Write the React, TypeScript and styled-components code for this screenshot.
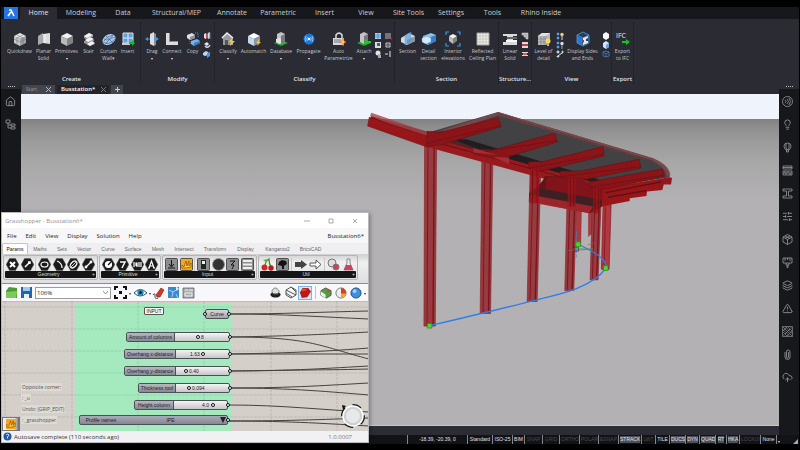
import React from "react";
import styled, { createGlobalStyle } from "styled-components";
import { CloudUpload, House, Layers, Lightbulb, Paperclip, SlidersHorizontal, TriangleAlert } from "lucide-react";

const Global = createGlobalStyle`
  *, *::before, *::after { box-sizing: border-box; }
  body { margin: 0; background: #000; font-family: "Open Sans", "Noto Sans", sans-serif; }
  button, select, input { font: inherit; color: inherit; margin: 0; padding: 0; border: 0; background: none; border-radius: 0; }
  svg { display: block; flex: none; }
  a { color: inherit; text-decoration: none; }
`;

/* ---------- shell ---------- */
const Page = styled.div`
  position: relative;
  display: flex;
  flex-direction: column;
  height: 100vh;
  padding: 7px 1px 6px;
  overflow: hidden;
  background: #000;
  color: #c9cacc;
`;
const MenuBar = styled.nav`
  display: flex;
  height: 12px;
  background: #16181c;
  font-size: 7px;
  line-height: 12px;
`;
const Logo = styled.button`
  width: 19px;
  padding-left: 3px;
`;
const MenuItem = styled.a<{ $w: number; $on?: boolean }>`
  width: ${(p) => p.$w}px;
  text-align: center;
  white-space: nowrap;
  color: ${(p) => (p.$on ? "#e2e2e4" : "#cdced0")};
  background: ${(p) => (p.$on ? "#2a2b33" : "transparent")};
`;
const Ribbon = styled.div`
  display: flex;
  height: 66px;
  padding: 3px 0 1px 2px;
  background: #2a2b33;
`;
const Group = styled.section<{ $w: number }>`
  display: flex;
  flex-direction: column;
  justify-content: space-between;
  width: ${(p) => p.$w}px;
  padding-top: 10px;
  border-right: 1px dotted #191a20;
`;
const Tools = styled.div`
  display: flex;
  justify-content: center;
`;
const GroupName = styled.h2`
  margin: 0 -1px 1px;
  text-align: center;
  white-space: nowrap;
  font-size: 6px;
  font-weight: 600;
  line-height: 8px;
  color: #e4e4e6;
`;
const Tool = styled.button<{ $w: number }>`
  display: flex;
  flex-direction: column;
  align-items: center;
  width: ${(p) => p.$w}px;
  font-size: 5px;
  line-height: 7px;
  color: #c6c7ca;
  white-space: pre;
  text-align: center;
`;
const ToolText = styled.span`
  margin-top: 2px;
`;
const Caret = styled.i<{ $dark?: boolean }>`
  width: 0;
  height: 0;
  margin-top: 3px;
  border: 1px solid transparent;
  border-top: 2px solid ${(p) => (p.$dark ? "#333" : "#e8e8e8")};
`;
const MiniStack = styled.div`
  display: flex;
  flex-direction: column;
  gap: 1px;
  align-items: center;
  width: 10px;
`;
const MiniButton = styled.button`
  height: 8px;
`;

/* ---------- body ---------- */
const Body = styled.div`
  display: flex;
  flex: 1;
  min-height: 0;
`;
const Side = styled.aside<{ $right?: boolean }>`
  display: flex;
  flex-direction: column;
  width: 20px;
  background: #16181c;
  & > button { margin-right: ${(p) => (p.$right ? 3 : 1)}px; }
`;
const Handle = styled.div`
  height: 4px;
  margin-bottom: 1px;
  background: #2a2b33;
  &::before {
    content: "";
    display: block;
    width: 7px;
    margin: 0 auto;
    padding-top: 1px;
    border-bottom: 1px dotted #c0c0c4;
  }
`;
const SideButton = styled.button`
  display: grid;
  place-items: center;
  height: 23px;
  color: #9a9b9f;
`;
const Main = styled.main`
  display: flex;
  flex: 1;
  flex-direction: column;
  min-width: 0;
`;
const DocTabs = styled.div`
  display: flex;
  gap: 2px;
  height: 9px;
  padding-left: 1px;
  background: #2a2b33;
  line-height: 9px;
`;
const DocTab = styled.button<{ $w: number; $on?: boolean }>`
  display: flex;
  align-items: center;
  justify-content: space-between;
  width: ${(p) => p.$w}px;
  padding: 0 ${(p) => (p.$on ? 3 : 4)}px 0 4px;
  background: ${(p) => (p.$on ? "#222328" : "#42454e")};
  color: ${(p) => (p.$on ? "#fff" : "#9a9ca3")};
  font-size: ${(p) => (p.$on ? 6 : 5)}px;
  font-weight: ${(p) => (p.$on ? 600 : 400)};
`;
const Viewport = styled.div`
  flex: 1;
  min-height: 0;
  border-bottom: 1px solid #c5c9c4;
  background: linear-gradient(#eef3fc 25px, #808081 25px, #8e8e8f 33px, #9d9c9d 48px, #a9a8a9 70px, #b3b1b4 110px);
`;
const CommandLine = styled.div`
  height: 9px;
  background: #2c2d34;
`;
const StatusBar = styled.footer`
  display: flex;
  justify-content: flex-end;
  height: 9px;
  padding-right: 1px;
  background: #121317;
  font-family: "Liberation Sans", Arial, sans-serif;
  font-size: 5px;
  line-height: 9px;
`;
const StatusCell = styled.button<{ $w: number; $kind: string }>`
  display: grid;
  place-items: center;
  width: ${(p) => p.$w}px;
  padding: 1px;
  border-left: 1px solid #85868a;
  line-height: 7px;
  white-space: nowrap;
  color: ${(p) => (p.$kind === "off" ? "#4a4b50" : "#e0e1e4")};
  span {
    background: ${(p) => (p.$kind === "on" ? "#4c505b" : "transparent")};
  }
`;
const Grip = styled.div`
  display: flex;
  justify-content: space-between;
  align-items: flex-end;
  width: 22px;
  padding-left: 1px;
  border-left: 1px solid #85868a;
`;

/* ---------- Grasshopper window ---------- */
const Window = styled.section`
  position: absolute;
  left: 1px;
  bottom: 7px;
  display: flex;
  flex-direction: column;
  width: 368px;
  height: 231px;
  border: 1px solid #b9b9bc;
  background: #f2f2f4;
  color: #222;
  font-size: 6px;
  box-shadow: 1px 1px 4px rgba(0, 0, 0, 0.35);
`;
const TitleBar = styled.header`
  display: flex;
  justify-content: space-between;
  align-items: center;
  height: 15px;
  padding: 0 10px 0 3px;
  background: #fff;
  color: #929292;
`;
const Controls = styled.div`
  display: flex;
  gap: 18px;
`;
const WinMenu = styled.nav`
  display: flex;
  align-items: center;
  gap: 9px;
  height: 15px;
  padding: 0 4px 0 5px;
  background: #f7f7f8;
  a:last-child { margin-left: auto; }
`;
const TabRow = styled.div`
  display: flex;
  height: 11px;
  background: #efeff1;
  font-family: "Liberation Sans", Arial, sans-serif;
  font-size: 5px;
`;
const Tab = styled.button<{ $w: number; $on?: boolean }>`
  width: ${(p) => p.$w}px;
  border-radius: 2px 2px 0 0;
  text-align: center;
  white-space: nowrap;
  color: ${(p) => (p.$on ? "#111" : "#666")};
  background: ${(p) => (p.$on ? "#fff" : "transparent")};
  border: ${(p) => (p.$on ? "1px solid #c4c4c8" : "0")};
  border-bottom: 0;
`;
const Palette = styled.div`
  display: flex;
  gap: 1px;
  height: 30px;
  padding: 1px 1px 3px;
  background: linear-gradient(#cfcfd1, #f0f0f1 30%, #dedee0);
  border-bottom: 1px solid #8c8c8e;
`;
const PaletteGroup = styled.div<{ $w: number }>`
  display: flex;
  flex-direction: column;
  width: ${(p) => p.$w}px;
  padding: 1px;
  border: 1px solid #b5b5b8;
  border-radius: 2px;
`;
const PaletteIcons = styled.div`
  display: flex;
  flex: 1;
  align-items: center;
  justify-content: space-around;
`;
const PaletteName = styled.div`
  display: flex;
  justify-content: center;
  height: 7px;
  padding-right: 1px;
  border-radius: 1px;
  background: #161616;
  color: #ddd;
  font: 5px/7px "Liberation Sans", Arial, sans-serif;
  span { flex: 1; text-align: center; }
`;
const Rule = styled.i`
  width: 1px;
  height: 13px;
  background: #c6c6c9;
`;
const CanvasBar = styled.div`
  display: flex;
  align-items: center;
  height: 17px;
  padding: 0 2px;
  background: #f8f8fa;
`;
const BarGroup = styled.div<{ $gap: number; $end?: boolean }>`
  display: flex;
  align-items: center;
  gap: ${(p) => p.$gap}px;
  margin-left: ${(p) => (p.$end ? "auto" : "0")};
`;
const BarRule = styled(Rule)`
  margin: 0 3px;
`;
const ZoomBox = styled.label`
  display: flex;
  align-items: center;
  width: 76px;
  height: 12px;
  margin: 0 2px;
  padding: 0 2px 0 1px;
  border: 1px solid #9c9ca0;
  background: #fff;
  select { flex: 1; appearance: none; outline: 0; line-height: 8px; }
`;
const IconButton = styled.button<{ $on?: boolean }>`
  display: grid;
  place-items: center;
  width: 14px;
  height: 14px;
  border: ${(p) => (p.$on ? "1px solid #79b4e8" : "0")};
  background: ${(p) => (p.$on ? "#d5e8f8" : "transparent")};
`;
const Canvas = styled.div`
  position: relative;
  flex: 1;
  min-height: 0;
  overflow: hidden;
  background: #d4cfc8;
  font-family: "Liberation Sans", Arial, sans-serif;
  font-size: 5px;
  & > svg { position: absolute; left: 0; top: 0; }
`;
const At = styled.div<{ $x: number; $y: number; $w?: number }>`
  position: absolute;
  left: ${(p) => p.$x}px;
  top: ${(p) => p.$y}px;
  width: ${(p) => (p.$w ? `${p.$w}px` : "auto")};
`;
const InputTag = styled(At)`
  border: 1px solid #555;
  border-radius: 1px;
  background: #f6f6f3;
  color: #222;
  line-height: 6px;
  text-align: center;
`;
const Node = styled(At)`
  display: flex;
  height: 10px;
  border: 1px solid #4d4f57;
  border-radius: 2px;
  background: linear-gradient(#f4f4f4, #c6c6c9);
  color: #222;
  line-height: 8px;
  white-space: nowrap;
  &::after {
    content: "";
    position: absolute;
    right: -3px;
    top: 2px;
    width: 4px;
    height: 4px;
    border: 1px solid #111;
    border-radius: 50%;
    background: #fff;
  }
`;
const NodeLabel = styled.label<{ $w: number }>`
  width: ${(p) => p.$w}px;
  border-right: 1px solid #4d4f57;
  background: linear-gradient(#b6b8c2, #868995);
  text-align: center;
`;
const Track = styled.div`
  position: relative;
  flex: 1;
  min-width: 0;
  input {
    display: block;
    width: 100%;
    height: 8px;
    appearance: none;
    background: transparent;
  }
  input::-webkit-slider-thumb {
    appearance: none;
    width: 4px;
    height: 4px;
    border: 1px solid #111;
    border-radius: 50%;
    background: #fff;
  }
`;
const Value = styled.output<{ $x: number }>`
  position: absolute;
  left: ${(p) => p.$x}px;
  top: 0;
`;
const CurveNode = styled(Node)`
  justify-content: center;
  background: linear-gradient(#d6d7dd, #a2a4ad);
  &::before {
    content: "";
    position: absolute;
    left: -3px;
    top: 2px;
    width: 4px;
    height: 4px;
    border: 1px solid #111;
    border-radius: 50%;
    background: #fff;
  }
`;
const ProfileNode = styled(Node)`
  background: linear-gradient(#a9acb8, #858894);
  label { width: 42px; text-align: center; }
  select { flex: 1; appearance: none; text-align: center; text-align-last: center; line-height: 8px; }
`;
const History = styled(At)`
  display: flex;
  flex-direction: column;
  align-items: flex-start;
  gap: 3px;
  font: 5px/8px "Open Sans", sans-serif;
  color: #55524f;
  span { padding: 0 1px; background: #dedad5; }
`;
const WidgetButton = styled.button`
  position: absolute;
  left: 0;
  bottom: 0;
  display: grid;
  place-items: center;
  width: 18px;
  height: 14px;
  border: 1px solid #777;
  background: linear-gradient(90deg, #eee 70%, #666);
`;
const WinStatus = styled.footer`
  display: flex;
  align-items: center;
  gap: 2px;
  height: 11px;
  padding: 0 16px 0 1px;
  background: #f1f1f3;
  color: #333;
  span:last-child { margin-left: auto; color: #777; }
`;

/* ---------- drawings ---------- */
const Cube = ({ a = "#eee", b = "#bbb", c = "#8f8f92" }) => (
  <>
    <path d="M7 1 13 4 7 7 1 4Z" fill={a} />
    <path d="M1 4 7 7V14L1 11Z" fill={b} />
    <path d="M13 4 7 7V14L13 11Z" fill={c} />
  </>
);
const art: Record<string, React.ReactNode> = {
  quick: <><Cube a="#eaeaea" b="#c9c9c9" c="#a0a0a2" /><path d="M1 7 7 10 13 7M4 3 10 6V13M10 3 4 6V13" stroke="#70727a" strokeWidth=".6" fill="none" /></>,
  planar: <><path d="M1 4 6 1V11L1 13Z" fill="#aaaaad" /><path d="M6 2 13 1V12L6 11Z" fill="#dcdcde" /><path d="M8 2V11" stroke="#f4f4f4" /></>,
  prim: <Cube a="#f1f1f1" b="#b9b9ba" c="#838386" />,
  stair: <><path d="M2 4 7 1 11 3V5L8 6 12 8V9L9 10 13 12 8 14 2 11V9L5 8 2 6Z" fill="#98989c" /><path d="M2 4 7 1 11 3 5 6ZM3 8 8 5 12 7 6 10ZM5 12 10 9 13 11 8 14Z" fill="#f2f2f2" /></>,
  curtain: <><ellipse cx="7" cy="7.500" rx="7" ry="5" fill="#a9c8e6" transform="rotate(-30 7 7.500)" /><path d="M2 9Q5 4 11 3M4 12Q6 7 13 5M1 10Q7 14 13 7M2 7Q7 10 11 3M4 4Q8 8 11 11" stroke="#345b94" strokeWidth=".6" fill="none" /></>,
  insert: <><path d="M2 1H12V11H2Z" fill="#5ca0e2" stroke="#ddd" /><path d="M7 1V11M2 6H12" stroke="#d6e8fa" /><path d="M1 12H9" stroke="#ccc" strokeWidth="2" /><path d="M8 10H11V8L14 11 11 14V12H8Z" fill="#10be20" /></>,
  drag: <><path d="M5 2 9 0V14L5 12Z" fill="#dddddf" /><path d="M9 1 11 2V13L9 14Z" fill="#8d8d91" /><path d="M0 7 3 5V9ZM14 7 11 5V9Z" fill="#3297f3" /><path d="M2 7H5M9 7H12" stroke="#3297f3" /></>,
  connect: <><path d="M1 1H5V9H13V13H1Z" fill="#dcdcde" /><path d="M4 1H5V9H13V10H4Z" fill="#8f8f93" /></>,
  copy: <><path d="M1 3 6 1 9 3V6L4 8 1 6Z" fill="#dedee0" /><path d="M4 5 9 3V6L4 8Z" fill="#8e8e92" /><path d="M5 9 11 7 14 9V11L8 14 5 12Z" fill="#75b1ee" /><path d="M8 11 14 9V11L8 14Z" fill="#3879bd" /><path d="M9 1H12V5M4 9V12" stroke="#4795e5" strokeDasharray="1 1" fill="none" /></>,
  classify: <><path d="M1 7 6 1 12 6V13H2V7Z" fill="#9a9a9d" /><path d="M1 6 6 1 12 6" stroke="#eee" fill="none" strokeWidth="1.500" /><path d="M4 8H7V13H4Z" fill="#555" /><path d="M11 6 8 10H10L9 14 14 9H11Z" fill="#ffc13b" /></>,
  auto: <><Cube a="#fff" b="#c6d7ea" c="#7898be" /><path d="M12 7 9 11H11L10 14 14 10H12Z" fill="#ffb63b" /></>,
  database: <><path d="M0 11 7 8 14 11 7 14Z" fill="#23ab2a" /><path d="M3 2 7 0 11 2V10L7 12 3 10Z" fill="#c4c4c7" /><path d="M7 4 11 2V10L7 12Z" fill="#77787c" /><path d="M2 7 5 6 7 7V11L5 12 2 10Z" fill="#e2e2e4" /></>,
  propagate: <><circle cx="7" cy="7" r="5.500" fill="#1877df" /><circle cx="7" cy="7" r="1.200" fill="#fff" /><path d="M5.500 5Q4 7 5.500 9M8.500 5Q10 7 8.500 9M4 4Q2 7 4 10M10 4Q12 7 10 10" stroke="#b6ddff" strokeWidth=".7" fill="none" /></>,
  lock: <><path d="M4 7V3Q7-1 10 3V7" stroke="#dedee0" strokeWidth="1.500" fill="none" /><path d="M1 6H12V13H1Z" fill="#d9d9dc" /><path d="M2 8H9M2 10H9" stroke="#777" /><path d="M11 6 12 9 14 10 12 11 11 14 10 11 7 10 10 9Z" fill="#ffd24a" stroke="#e45d30" strokeWidth=".5" /></>,
  attach: <><path d="M0 11 7 8 14 11 7 14Z" fill="#24a52a" /><path d="M3 2 7 0 11 2V10L7 12 3 10Z" fill="#c4c4c7" /><path d="M7 4 11 2V10L7 12Z" fill="#77787b" /><path d="M7 10 10 7V9H14V11H10V13Z" fill="#16ce25" /></>,
  section: <><path d="M0 6 8 1 14 4V9L6 13 0 10Z" fill="#d7dadd" /><path d="M6 8 14 4V9L6 13Z" fill="#919499" /><path d="M4 4 10 0V9L4 13Z" fill="#4a99e0" fillOpacity=".6" stroke="#55a8f2" strokeWidth=".5" /></>,
  detail: <><path d="M1 4 9 1 14 3V9L6 13 1 10Z" fill="#8ec0f0" /><path d="M6 6 14 3V9L6 13Z" fill="#387fc6" /><path d="M0 6 5 4 9 6V10L4 12 0 10Z" fill="#d6e9fb" stroke="#4999e5" strokeWidth=".5" /></>,
  interior: <><path d="M0 3V0H3M11 0H14V3M14 11V14H11M3 14H0V11" stroke="#3b98ee" fill="none" strokeWidth="1.200" /><path d="M7 2 11 4 7 7 3 4Z" fill="#f2f2f2" /><path d="M3 4 7 7V12L3 9Z" fill="#bababd" /><path d="M11 4 7 7V12L11 9Z" fill="#818185" /></>,
  ceiling: <><path d="M1 1H13V13H1Z" fill="#eee" /><path d="M4 1V13M7 1V13M10 1V13M1 4H13M1 7H13M1 10H13" stroke="#b5b5ad" strokeWidth=".6" fill="none" /><path d="M1 1H13V13H1Z" stroke="#a4a49c" fill="none" /></>,
  beam: <><path d="M0 2H14V4H10V10H14V13H0V10H4V4H0Z" fill="#d9d9dc" /><path d="M4 5H14V7H4Z" fill="#66676c" /><path d="M3 8H14V10H3Z" fill="#fafafa" /></>,
  level: <><path d="M1 4 5 1H13V11L9 13H1Z" fill="#b9b9bc" /><path d="M1 4 5 1H13L9 4Z" fill="#e1e1e3" /><path d="M1 7H9M1 10H9M4 4V13M7 4V13M9 4V13" stroke="#77787c" strokeWidth=".6" /><circle cx="11" cy="9" r="2.500" fill="#ffd75c" /><path d="M10 11H12V14H10Z" fill="#ddb15f" /></>,
  display: <><path d="M1 3 7 0 13 3V11L7 14 1 11Z" fill="#2c3c54" /><path d="M1 4 6 6V13L1 11Z" fill="#2e79cc" /><path d="M1 3 7 0 13 3 7 6ZM7 6V14M13 3V11L7 14 1 11V3" fill="none" stroke="#4a9df2" strokeWidth=".8" /><path d="M7 6 12 4V6L10 7V9L12 9V11L7 13V11L8 10V8L7 8Z" fill="#e8e8eb" /></>,
  ifc: <><text x="0" y="6" fontSize="7" fill="#eee">IFC</text><path d="M6 9H10V7L14 10 10 13V11H6Z" fill="#19c419" /></>,
};
const Art = ({ n }: { n: string }) => <svg width="14" height="14" viewBox="0 0 14 14" overflow="visible">{art[n]}</svg>;

const miniArt: Record<string, React.ReactNode> = {
  door: <><path d="M1 2 3 1V7L1 6ZM5 1 7 0V6L5 7Z" fill="#ddd" /><path d="M3 2 5 1V6L3 7Z" fill="#bf5650" /><path d="M7 1V7" stroke="#4586cf" /></>,
  turn: <><path d="M1 3 4 1 6 3 4 5Z" fill="#e5e5e5" /><path d="M2 5Q5 8 7 4" stroke="#cdd9e7" fill="none" strokeWidth="1.500" /></>,
  blue: <><path d="M0 3 3 1 5 2V5L2 6 0 5Z" fill="#b8d8f8" /><path d="M4 3 7 2V6L4 8Z" fill="#4e98e3" /></>,
  table: <><path d="M1 1H7V7H1Z" fill="#a9d0f4" /><path d="M1 3H7M1 5H7M4 1V7" stroke="#3682c8" strokeWidth=".7" /></>,
  beamred: <><path d="M1 2H7V3H1ZM1 5H7V6H1Z" fill="#ddd" /><path d="M2 3H6V5H2Z" fill="#d65b5b" /></>,
  grayred: <><path d="M1 1H7V7H1Z" fill="#747478" /><path d="M5 6 8 7" stroke="#c53b3b" /></>,
  frame: <><path d="M1 1H7V7H1Z" fill="#dcdce0" /><path d="M3 2H6V5H3Z" fill="#535964" /></>,
  gear: <><circle cx="4" cy="4" r="3" fill="#a8a8ac" /><path d="M1 4H7M4 1V7" stroke="#56565a" /></>,
  shape: <><circle cx="4" cy="3" r="2.500" fill="#e2e2e5" /><path d="M4 4 7 5V8H4Z" fill="#aaa" /></>,
  dash: <><path d="M1 4H4" stroke="#ddd" /><path d="M6 1V7" stroke="#eee" /></>,
  clamp: <path d="M1 1H7V7H5V5H3V3H1Z" fill="#b3b3b7" stroke="#e1e1e3" strokeWidth=".5" />,
  red: <><path d="M1 1H7V3H1ZM1 5H7V7H1Z" fill="#ddd" /><path d="M1 3H7V5H1Z" fill="#d43a3a" /></>,
  bulbs: <><path d="M1 1H3V3H1ZM1 5H3V7H1Z" fill="#5a9fe8" stroke="#5a9fe8" strokeWidth=".5" /><circle cx="6" cy="2.500" r="1.700" fill="#ffd260" /><path d="M6 4V8" stroke="#ddd" /></>,
  bulbs2: <><path d="M1 1H3V3H1ZM1 5H3V7H1Z" fill="#5a9fe8" stroke="#5a9fe8" strokeWidth=".5" /><circle cx="6" cy="2.500" r="1.700" fill="#ddd" /><path d="M6 4V8" stroke="#aaa" /></>,
  move: <><path d="M1 1H3V3H1ZM1 6H3V7H1ZM6 1H7V3H6Z" fill="#6db0ee" stroke="#eee" strokeWidth=".6" /><path d="M2 6 6 3" stroke="#eee" /></>,
  hexw: <path d="M4 0 7 2V6L4 8 1 6V2Z" fill="#f5f7fa" />,
  hexb: <><path d="M4 0 7 2V6L4 8 1 6V2Z" fill="#cfe6fc" /><path d="M4 4 7 2V6L4 8Z" fill="#64a2de" /></>,
  hexl: <path d="M4 1 7 2V6L4 7 1 6V2ZM1 2 4 4 7 2M4 4V7" fill="#1d3250" stroke="#5a83b6" strokeWidth=".7" />,
};
const Minis = ({ list }: { list: string[] }) => (
  <MiniStack>
    {list.map((n) => (
      <MiniButton key={n} aria-label={n}><svg width="8" height="8" viewBox="0 0 8 8">{miniArt[n]}</svg></MiniButton>
    ))}
  </MiniStack>
);

type Entry = { w: number; t: string; n: string; c?: boolean } | string[];
const groups: { name: string; w: number; items: Entry[] }[] = [
  { name: "Create", w: 138, items: [
    { w: 26, t: "Quickdraw", n: "quick" }, { w: 22, t: "Planar\nSolid", n: "planar" }, { w: 24, t: "Primitives", n: "prim", c: true },
    { w: 20, t: "Stair", n: "stair" }, { w: 20, t: "Curtain\nWall▾", n: "curtain" }, { w: 18, t: "Insert", n: "insert" }] },
  { name: "Modify", w: 74, items: [
    { w: 18, t: "Drag", n: "drag", c: true }, { w: 22, t: "Connect", n: "connect", c: true }, { w: 19, t: "Copy", n: "copy" }, ["door", "turn", "blue"]] },
  { name: "Classify", w: 180, items: [
    { w: 24, t: "Classify", n: "classify", c: true }, { w: 27, t: "Automatch", n: "auto" }, { w: 28, t: "Database", n: "database", c: true },
    { w: 27, t: "Propagate", n: "propagate", c: true }, { w: 33, t: "Auto\nParametrize", n: "lock" }, { w: 18, t: "Attach", n: "attach", c: true },
    ["table", "frame", "shape"], ["grayred", "gear", "dash"]] },
  { name: "Section", w: 104, items: [
    { w: 23, t: "Section", n: "section" }, { w: 19, t: "Detail\nsection", n: "detail" }, { w: 30, t: "Interior\nelevations", n: "interior" }, { w: 29, t: "Reflected\nCeiling Plan", n: "ceiling" }] },
  { name: "Structure...", w: 33, items: [{ w: 20, t: "Linear\nSolid", n: "beam" }, ["clamp", "red", "beamred"]] },
  { name: "View", w: 80, items: [
    { w: 22, t: "Level of\ndetail", n: "level" }, ["bulbs", "bulbs2", "move"], { w: 36, t: "Display Sides\nand Ends", n: "display" }, ["hexw", "hexb", "hexl"]] },
  { name: "Export", w: 22, items: [{ w: 20, t: "Export\nto IFC", n: "ifc" }] },
];
const menus: [string, number][] = [["Home", 37], ["Modeling", 48], ["Data", 36], ["Structural/MEP", 71], ["Annotate", 40], ["Parametric", 52], ["Insert", 41], ["View", 42], ["Site Tools", 43], ["Settings", 42], ["Tools", 41], ["Rhino Inside", 56]];

const Line = ({ d, w = 0.8 }: { d: string; w?: number }) => (
  <svg width="11" height="11" viewBox="0 0 11 11" fill="none" stroke="currentColor" strokeWidth={w}><path d={d} /></svg>
);
const lucide = { size: 11, strokeWidth: 1.8 };
const sideIcons: [string, React.ReactNode][] = [
  ["Rings", <svg key="r" width="11" height="11" viewBox="0 0 11 11" fill="none" stroke="currentColor" strokeWidth=".8"><circle cx="5.500" cy="5.500" r="5" /><path d="M5 3Q8 5.500 5 8M3 4Q5 5.500 3 7M7 2Q10 5.500 7 9" /></svg>],
  ["Tips", <Lightbulb key="l" {...lucide} />],
  ["Balloon", <Line key="b" d="M2 4Q2 1 5.500 1T9 4Q9 6 7 8H4Q2 6 2 4M4 1.500V6L5 8M7 1.500V6L6 8M4.500 8V10H6.500V8" />],
  ["Walls", <Line key="w" d="M1 1H10V4H1ZM1 2.500H10M1 6H10V10H1ZM1 8H10M3 6V8M6 6V8M8 8V10M4 8V10" />],
  ["Profiles", <Line key="p" d="M1 1H10V3H6.500V8H10V10H1V8H4.500V3H1Z" />],
  ["Properties", <SlidersHorizontal key="s" {...lucide} />],
  ["Components", <Line key="c" d="M5.500.500 10 3V8L5.500 10.500 1 8V3ZM1 3 5.500 5.500 10 3M5.500 5.500V10.500M3 2 8 4.500M8 2 3 4.500" />],
  ["Render", <Line key="n" d="M1 1H10V6H1ZM3 1V4M5.500 1V3M8 1V4M4 6V8H7V6M5 8V10.500H6V8" />],
  ["Layers", <Layers key="y" {...lucide} />],
  ["Warnings", <TriangleAlert key="t" {...lucide} />],
  ["Hatches", <Line key="h" w={0.6} d="M.500.500H10.500V10.500H.500ZM.500 3 8 10.500M.500 5.500 5.500 10.500M.500 8 3 10.500M.500.500 10.500 10.500M3 .500 10.500 8M5.500.500 10.500 5.500M8 .500 10.500 3M3 8 8 3M5 10 10 5M1 5 5 1" />],
  ["Attachments", <Line key="a" d="M3 3V8Q3 10.500 5.500 10.500T8 8V3Q8 1 6.200 1T4.500 3V8Q4.500 9 5.500 9T6.500 8V3" />],
  ["Cloud", <CloudUpload key="u" {...lucide} />],
];

/* The bus shelter, drawn in a space three times the size of the view. */
const columns: [number, number, number, number, number][] = [
  [194, 168, 192, 706, 36], [366, 202, 361, 668, 33], [511, 232, 502, 632, 32], [624, 250, 615, 599, 29], [700, 280, 691, 567, 26],
];
const Scene = () => (
  <svg width="100%" height="100%" viewBox="0 0 758 331" preserveAspectRatio="xMinYMin slice" aria-label="Bus station model">
    <g transform="translate(339 -4) scale(.333)">
      <path d="M650 360 665 360 663 462 649 460ZM686 340 697 340 697 430 686 440Z" fill="#a93a40" stroke="#871014" />
      <path d="M730 345H754L748 538H725Z" fill="#b3222a" fillOpacity=".85" stroke="#8a1115" strokeWidth="2" />
      <path d="M737 350 733 536" stroke="#6c1115" strokeWidth="2" />
      {columns.map(([x1, y1, x2, y2, w]) => (
        <g key={x1}>
          <path d={`M${x1} ${y1}h${w}L${x2 + w - 2} ${y2 + 3}H${x2}Z`} fill="#983b41" stroke="#8c2227" strokeWidth="2" />
          <path d={`M${x1 + w * 0.28} ${y1}L${x2 + w * 0.26} ${y2}`} stroke="#7c171c" strokeWidth="3" />
          <path d={`M${x1 + w * 0.8} ${y1}L${x2 + w * 0.76} ${y2}`} stroke="#76151a" strokeWidth="4" />
        </g>
      ))}
      <path d="M34 80 205 128 415 66 880 205Q930 228 930 262L720 294 250 160Z" fill="#424143" />
      <path d="M34 78 205 126 240 130 390 180 380 190 200 145 30 86Z" fill="#502326" />
      <path d="M278 148 320 148 670 252 720 270 720 290 510 236Z" fill="#211e21" />
      <path d="M34 68 202 126 198 150 30 78Z" fill="#a94348" fillOpacity=".8" />
      <path d="M28 82 200 138 198 170 23 108Z" fill="#981519" stroke="#771014" strokeWidth="2" />
      <path d="M200 140 720 282 735 310 700 306 196 170Z" fill="#981a1f" />
      <path d="M210 152 715 292" stroke="#6f0d12" strokeWidth="3" />
      <path d="M240 122 415 66 880 205Q930 225 932 256L922 262Q915 226 870 212L414 76 275 124Z" fill="#84484c" fillOpacity=".8" />
      <path d="M414 72 880 213" stroke="#5c2a2e" strokeWidth="3" strokeDasharray="3 2" fill="none" />
      <path d="M556 258Q545 285 508 309L507 334 690 370 735 345V300L640 262Z" fill="#5f1519" />
      <path d="M512 304 560 296 690 322 720 340 700 356 508 325Z" fill="#3d2023" />
      <path d="M560 262 642 262 730 294V330L556 298Z" fill="#84151a" fillOpacity=".92" />
      <path d="M510 314 700 350 688 370 507 336Z" fill="#a4262c" fillOpacity=".9" />
      <path d="M730 294 930 262 937 264 934 284 912 284 908 300 862 305 860 318 810 325V333L725 350Z" fill="#981519" />
      <path d="M738 308 905 276M745 322 860 302" stroke="#5f1014" strokeWidth="4" />
      {["M202 124 240 128 415 83 424 110 245 164 200 170Z", "M340 178 400 180 585 130 593 156 420 208 342 192Z", "M506 216 550 215 730 170 733 198 550 242 508 236Z", "M600 244 665 243 838 208 844 234 680 268 603 262Z", "M690 276 740 267 908 237 914 259 738 297 692 294Z"].map((d) => (
        <path key={d} d={d} fill="#8a1418" stroke="#6c1014" strokeWidth="2" />
      ))}
      <path d="M200 160 420 108M345 190 590 152M510 234 730 194M603 260 842 230M692 292 912 256" stroke="#74101a" strokeWidth="3" />
      <path d="M626 264H648V350H622ZM702 292H720V370H698ZM512 236H538V340H510Z" fill="#9c161b" fillOpacity=".7" />
      <path d="M632 264V350M642 264V350M706 292V370M716 292V370M518 240V340M532 240V340" stroke="#690c10" strokeWidth="2" />
      <path d="M340 174 410 195 340 188ZM398 202 448 202 448 222Z" fill="#a9363c" fillOpacity=".8" />
      <path d="M208 708C310 684 430 656 530 630C610 612 700 590 738 536C748 508 690 480 655 463" fill="none" stroke="#2a7fe8" strokeWidth="4" />
      <path d="M624 482 700 478M684 465 702 460" stroke="#b34d53" strokeWidth="2" />
      <path d="M640 477H700" stroke="#37a448" strokeWidth="2" />
      <path d="M650 425V502" stroke="#3488c9" strokeWidth="2" strokeDasharray="18 5" />
      <path d="M644 472H656V484H644Z" fill="none" stroke="#333" strokeWidth="2" />
      <path d="M202 701H216V715H202ZM648 456H662V470H648ZM731 528H745V542H731Z" fill="#48da24" stroke="#248714" strokeWidth="2" />
    </g>
  </svg>
);

/* palette icons */
const Hex = ({ children }: { children: React.ReactNode }) => (
  <svg width="13" height="13" viewBox="0 0 13 13" fill="none" stroke="#fff" strokeWidth="1.200">
    <path d="M3.500.500H9.500L12.800 6.500 9.500 12.500H3.500L.200 6.500Z" fill="#1b1b1b" stroke="#555" strokeWidth=".5" />
    {children}
  </svg>
);
const Sq = ({ children, fill = "#8d8d8f" }: { children: React.ReactNode; fill?: string }) => (
  <svg width="13" height="13" viewBox="0 0 13 13" fill="none"><rect x=".5" y=".5" width="12" height="12" rx="1" fill={fill} stroke="#333" strokeWidth=".8" />{children}</svg>
);
const Pic = ({ children, size = 13 }: { children: React.ReactNode; size?: number }) => (
  <svg width={size} height={size} viewBox="0 0 13 13" fill="none">{children}</svg>
);
const Graph = () => <path d="M2 10V7L4 9 6 3 7 8 9 3 9 8 11 5V9L6 10Z" fill="#ffdf46" stroke="#a14b08" strokeWidth=".8" />;

const palette: { name: string; w: number; icons: React.ReactNode[] }[] = [
  { name: "Geometry", w: 95, icons: [
    <Hex key="1"><path d="M4 4 9 9M9 4 4 9" strokeWidth="2" /></Hex>,
    <Hex key="2"><path d="M4 9 9 4M7 4H9V6" strokeWidth="1.500" /></Hex>, <Rule key="r" />,
    <Hex key="3"><ellipse cx="6.500" cy="6.500" rx="3.500" ry="2.500" /></Hex>,
    <Hex key="4"><path d="M4 3Q9 5 9 10" /></Hex>,
    <Hex key="5"><ellipse cx="6.500" cy="6.500" rx="4" ry="2.500" transform="rotate(-45 6.500 6.500)" /><path d="M4 9 9 4" strokeWidth=".8" /></Hex>,
    <Hex key="6"><path d="M4 9 9 4" /><circle cx="4" cy="9" r=".8" /><circle cx="9" cy="4" r=".8" /></Hex>] },
  { name: "Primitive", w: 62, icons: [
    <Hex key="1"><circle cx="6.500" cy="6.500" r="3" fill="#fff" /><path d="M6 7 9 4" stroke="#111" /></Hex>,
    <Hex key="2"><path d="M4 4H9L6 10" strokeWidth="1.500" /></Hex>,
    <Hex key="3"><path d="M3 4V9M10 4V9M5 8V5H6V9M8 4V9" /></Hex>,
    <Hex key="4"><path d="M4 10 6.500 3 9 10M5 8H8M3 10H5M8 10H10" /></Hex>] },
  { name: "Input", w: 95, icons: [
    <Sq key="1"><path d="M6.500 2V8M4 6 6.500 9 9 6M3 10H10" stroke="#111" /></Sq>, <Sq key="2" fill="#f5a721"><Graph /></Sq>, <Rule key="r" />,
    <Sq key="3"><path d="M4 2H9V11H4Z" fill="#222" /><path d="M5 3H8V6H5Z" fill="#eee" /></Sq>,
    <Pic key="4"><circle cx="6.500" cy="6.500" r="6" fill="#333" stroke="#999" /></Pic>,
    <Sq key="5"><path d="M4 3H9L5 7H8L6 11" stroke="#111" /></Sq>, <Sq key="6"><path d="M2 3H11M2 6.500H11M2 10H11" stroke="#eee" strokeWidth="2" /></Sq>] },
  { name: "Util", w: 100, icons: [
    <Pic key="1"><path d="M4 9Q4 3 8 1Q8 6 10 9" stroke="#3a8d27" strokeWidth="1.300" /><path d="M2 2 8 1 5 4Z" fill="#57b13a" /><circle cx="3.500" cy="9.500" r="3" fill="#d32626" /><circle cx="10" cy="10" r="2.700" fill="#b91a1a" /></Pic>,
    <Sq key="2"><path d="M6 11V8L2 7 3 4 6 2 10 3 11 6 8 8V11Z" fill="#111" /></Sq>, <Rule key="r" />,
    <Pic key="3"><path d="M1 4H7V2L13 6.500 7 11V9H1Z" fill="#444" /></Pic>,
    <Pic key="4"><path d="M1 5H7V2L12 6.500 7 11V8H1Z" fill="#fff" stroke="#555" /></Pic>, <Rule key="r2" />,
    <Pic key="5"><circle cx="5" cy="5" r="4" fill="#ddd" stroke="#777" /><circle cx="9" cy="9" r="3" fill="#cc4255" stroke="#777" /></Pic>,
    <Pic key="6"><path d="M5 1H8V5L11 12H2L5 5Z" fill="#eee" stroke="#888" /><path d="M4 7H9L11 12H2Z" fill="#d83c57" /></Pic>] },
];
const winTabs: [string, number][] = [["Params", 26], ["Maths", 24], ["Sets", 20], ["Vector", 24], ["Curve", 24], ["Surface", 26], ["Mesh", 24], ["Intersect", 28], ["Transform", 34], ["Display", 27], ["Kangaroo2", 37], ["BricsCAD", 29]];

const sliders = [
  { id: "cols", label: "Amount of columns", x: 124, y: 31, w: 104, lw: 48, pos: 41, v: "8", vx: 26 },
  { id: "ox", label: "Overhang x-distance", x: 122, y: 48, w: 106, lw: 51, pos: 52, v: "1.63", vx: 14 },
  { id: "oy", label: "Overhang y-distance", x: 122, y: 65, w: 106, lw: 51, pos: 16, v: "0.40", vx: 13 },
  { id: "roof", label: "Thickness roof", x: 136, y: 82, w: 92, lw: 37, pos: 22, v: "0.094", vx: 16 },
  { id: "height", label: "Height column", x: 132, y: 99, w: 94, lw: 39, pos: 75, v: "4.0", vx: 28 },
];
const wires = ["M229 13C280 13 320 11 367 10", "M229 13C280 13 320 16 367 18", "M229 36C290 35 330 33 367 31", "M229 36C310 36 320 46 367 58", "M229 53C290 52 330 50 367 47", "M229 53H367", "M229 70C290 70 330 67 367 65", "M229 70C290 69 330 69 367 68", "M229 87C290 87 330 84 367 82", "M229 87C290 87 330 91 367 94", "M227 104C280 104 320 109 367 111", "M227 120C290 120 330 118 367 117", "M227 120C290 120 330 123 367 125"];

const statusCells: [string, number, string][] = [["-18.39, -20.39, 0", 60, "text"], ["Standard", 25, "text"], ["ISO-25", 20, "text"], ["BIM", 12, "text"], ["SNAP", 18, "off"], ["GRID", 17, "off"], ["ORTHO", 20, "off"], ["POLAR", 19, "off"], ["ESNAP", 20, "off"], ["STRACK", 23, "on"], ["LWT", 14, "off"], ["TILE", 14, "text"], ["DUCS", 16, "on"], ["DYN", 14, "on"], ["QUAD", 16, "on"], ["RT", 11, "on"], ["HKA", 13, "on"], ["LOCKUI", 21, "off"], ["None", 16, "text"]];

const Grasshopper = () => (
  <Window aria-label="Grasshopper">
    <TitleBar>
      <span>Grasshopper - Busstation6*</span>
      <Controls>
        {["M0 3H6", "M1 1H5V5H1Z", "M1 1 5 5M5 1 1 5"].map((d, i) => (
          <button key={d} aria-label={["Minimize", "Maximize", "Close"][i]}><svg width="6" height="6" fill="none" stroke="#888" strokeWidth=".7"><path d={d} /></svg></button>
        ))}
      </Controls>
    </TitleBar>
    <WinMenu>{["File", "Edit", "View", "Display", "Solution", "Help", "Busstation6*"].map((t) => <a key={t} href="#m">{t}</a>)}</WinMenu>
    <TabRow>{winTabs.map(([t, w], i) => <Tab key={t} $w={w} $on={i === 0}>{t}</Tab>)}</TabRow>
    <Palette>
      {palette.map((g) => (
        <PaletteGroup key={g.name} $w={g.w}>
          <PaletteIcons>{g.icons}</PaletteIcons>
          <PaletteName><span>{g.name}</span>+</PaletteName>
        </PaletteGroup>
      ))}
    </Palette>
    <CanvasBar>
      <BarGroup $gap={1}>
        <IconButton aria-label="Open"><Pic><path d="M1 5 4 1 12 2V12H1Z" fill="#4c9b37" /><path d="M1 6 12 5 11 12H1Z" fill="#7dc95b" /></Pic></IconButton>
        <IconButton aria-label="Save"><Pic><path d="M1 1H12V12H1Z" fill="#2364af" /><path d="M3 1H10V5H3Z" fill="#9fc9ec" /><path d="M4 8H9V12H4Z" fill="#eee" /></Pic></IconButton>
      </BarGroup>
      <ZoomBox><select aria-label="Zoom"><option>106%</option></select><svg width="5" height="5" fill="none" stroke="#777" strokeWidth=".8"><path d="M0 1 2.500 4 5 1" /></svg></ZoomBox>
      <BarGroup $gap={2}>
        <IconButton aria-label="Zoom extents"><Pic><path d="M1 4V1H4M9 1H12V4M12 9V12H9M4 12H1V9" stroke="#111" strokeWidth="2" /><path d="M5 5H8V8H5Z" fill="#111" /></Pic></IconButton>
        <Caret $dark />
        <IconButton aria-label="Preview"><Pic><path d="M0 7Q6 0 13 7Q6 13 0 7Z" fill="#fff" stroke="#2c556d" /><circle cx="6.500" cy="6.500" r="3.200" fill="#2d87b3" /><circle cx="6.500" cy="6.500" r="1.300" fill="#111" /></Pic></IconButton>
        <Caret $dark />
      </BarGroup>
      <BarGroup $gap={1}>
        <IconButton aria-label="Sketch"><Pic><path d="M4 9 9 2 12 4 8 11 5 11Z" fill="#d4362b" stroke="#73201a" strokeWidth=".6" /><path d="M1 9Q3 6 3 10T6 12" stroke="#222" strokeWidth=".8" /></Pic></IconButton>
        <IconButton aria-label="Map"><Pic><path d="M1 1H12V12H1Z" fill="#3c88cc" /><path d="M2 4 6 6 11 3M5 11 6 6M9 8 11 12" stroke="#a7d3f2" /><path d="M9 0 12 3 9 5Z" fill="#d9ebf8" /></Pic></IconButton>
        <IconButton aria-label="Print"><Pic><path d="M1 2H12V12H1Z" fill="#aab0b5" stroke="#555" strokeWidth=".7" /><path d="M3 4H6M7 4H11M3 7H10V10H3Z" stroke="#eee" /></Pic></IconButton>
      </BarGroup>
      <BarGroup $gap={1} $end>
        <IconButton aria-label="No preview"><Pic size={11}><ellipse cx="6.500" cy="9" rx="6" ry="3.500" fill="#222" /><path d="M2 5Q6 -3 11 5L9 8H4Z" fill="#ddd" stroke="#777" /></Pic></IconButton>
        <IconButton aria-label="Wire preview"><Pic><path d="M2 4 7 1 12 4V9L7 12 2 9ZM2 4 12 9M7 1 12 6M2 7 8 11" stroke="#555" /></Pic></IconButton>
        <IconButton aria-label="Shaded preview" $on><Pic size={12}><path d="M1 6 4 1 10 1 13 5 9 11 3 12Z" fill="#b71c16" /><path d="M4 2 9 2 7 4 3 5Z" fill="#ec4a3b" /></Pic></IconButton>
      </BarGroup>
      <BarRule />
      <BarGroup $gap={1}>
        <IconButton aria-label="Selected only"><Pic size={12}><path d="M1 4 6 1 12 4 12 9 7 12 1 9Z" fill="#4fa23b" stroke="#555" /><path d="M1 5 6 8V12L1 9Z" fill="#eee" /><path d="M7 2 11 4 8 7Z" fill="#d44" /></Pic></IconButton>
        <IconButton aria-label="Colours"><Pic size={12}><circle cx="6.500" cy="6.500" r="5.500" fill="#eee" stroke="#777" /><path d="M6.500 1A5.500 5.500 0 0 1 6.500 12Z" fill="#d83f20" /><path d="M6.500 7H12Q11 12 6.500 12Z" fill="#f2a62a" /></Pic></IconButton>
        <IconButton aria-label="Mesh quality"><Pic size={12}><circle cx="6.500" cy="6.500" r="5.500" fill="#3f8fdc" stroke="#1c4c83" /><circle cx="5" cy="4.500" r="2" fill="#a6d2fb" /></Pic></IconButton>
        <Caret $dark />
      </BarGroup>
    </CanvasBar>
    <Canvas>
      <svg width="366" height="131" fill="none">
        <path d="M0 0H366" stroke="#aaa7a2" />
        <rect x="74" y="3" width="156" height="128" fill="#a5eabf" />
        <path d="M3 0V131M70 0V131M136 0V131M202 0V131M269 0V131M335 0V131M0 6H366M0 28H366M0 50H366M0 72H366M0 94H366M0 116H366" stroke="#000" strokeOpacity=".1" strokeDasharray="3 1" />
        {wires.map((d) => <path key={d} d={d} stroke="#454342" />)}
      </svg>
      <InputTag $x={142} $y={6} $w={20}>INPUT</InputTag>
      <CurveNode $x={203} $y={8} $w={24}>Curve</CurveNode>
      {sliders.map((s) => (
        <Node key={s.id} $x={s.x} $y={s.y} $w={s.w}>
          <NodeLabel htmlFor={s.id} $w={s.lw}>{s.label}</NodeLabel>
          <Track>
            <input id={s.id} type="range" min={0} max={100} defaultValue={s.pos} />
            <Value $x={s.vx}>{s.v}</Value>
          </Track>
        </Node>
      ))}
      <ProfileNode $x={77} $y={114} $w={149}>
        <label htmlFor="profile">Profile names</label>
        <select id="profile"><option>IPE</option></select>
        <svg width="8" height="8"><path d="M1 1H7L4 7Z" fill="#222" /></svg>
      </ProfileNode>
      <History $x={19} $y={82}>
        <span>Opposite corner:</span><span>: _u</span><span>Undo: (GRIP_EDIT)</span><span>: _grasshopper</span>
      </History>
      <WidgetButton aria-label="Graph"><svg width="12" height="12" viewBox="0 0 13 13"><path d="M1 1H12V12H1Z" fill="#f5a721" /><Graph /></svg></WidgetButton>
      <At $x={338} $y={102}>
        <svg width="26" height="26" viewBox="0 0 26 26" fill="none">
          <circle cx="13" cy="13" r="11" stroke="#1a1a1a" strokeWidth="2" strokeDasharray="9 8" />
          <circle cx="13" cy="13" r="10" fill="#cfd0d2" stroke="#fff" strokeWidth="1.500" />
          <circle cx="13" cy="13" r="7" fill="#e8e8e8" />
          <path d="M2 2 6 3 3 7Z" fill="#111" />
        </svg>
      </At>
    </Canvas>
    <WinStatus>
      <svg width="9" height="9" viewBox="0 0 9 9"><circle cx="4.500" cy="4.500" r="4" fill="#1f5aa3" /><path d="M3 3Q4.500 1 6 3L4.500 5V6.500" stroke="#cfe4fa" fill="none" /></svg>
      <span>Autosave complete (110 seconds ago)</span>
      <span>1.0.0007</span>
    </WinStatus>
  </Window>
);

const App = () => (
  <Page>
    <Global />
    <MenuBar>
      <Logo aria-label="Application menu"><svg width="14" height="12" viewBox="0 0 14 12"><path d="M0 0H14V12H0Z" fill="#2476e6" /><path d="M5 3H7L10 9M7 5 4 9" stroke="#fff" strokeWidth="1.600" fill="none" /></svg></Logo>
      {menus.map(([t, w], i) => <MenuItem key={t} href="#m" $w={w} $on={i === 0}>{t}</MenuItem>)}
    </MenuBar>
    <Ribbon>
      {groups.map((g) => (
        <Group key={g.name} $w={g.w}>
          <Tools>
            {g.items.map((it, i) => Array.isArray(it) ? <Minis key={i} list={it} /> : (
              <Tool key={it.n} $w={it.w}><Art n={it.n} /><ToolText>{it.t}</ToolText>{it.c && <Caret />}</Tool>
            ))}
          </Tools>
          <GroupName>{g.name}</GroupName>
        </Group>
      ))}
    </Ribbon>
    <Body>
      <Side>
        <Handle />
        <SideButton aria-label="Home"><House {...lucide} /></SideButton>
        <SideButton aria-label="Structure"><Line d="M1 1H5V4H1ZM6 5H10V7H6ZM6 8H10V10H6ZM3 4V9H6M3 6H6" /></SideButton>
      </Side>
      <Main>
        <DocTabs>
          <DocTab $w={33}><span>Start</span><svg width="5" height="5" stroke="#bbb"><path d="M0 0 5 5M5 0 0 5" /></svg></DocTab>
          <DocTab $w={52} $on><span>Busstation*</span><svg width="5" height="5" stroke="#777"><path d="M0 0 5 5M5 0 0 5" /></svg></DocTab>
          <DocTab $w={12} aria-label="New drawing"><svg width="5" height="5" stroke="#ccc"><path d="M0 2.500H5M2.500 0V5" /></svg></DocTab>
        </DocTabs>
        <Viewport><Scene /></Viewport>
        <CommandLine />
      </Main>
      <Side $right>
        <Handle />
        {sideIcons.map(([n, icon]) => <SideButton key={n} aria-label={n}>{icon}</SideButton>)}
      </Side>
    </Body>
    <StatusBar>
      {statusCells.map(([t, w, k]) => <StatusCell key={t} $w={w} $kind={k}><span>{t}</span></StatusCell>)}
      <Grip><Caret /><svg width="5" height="5"><path d="M5 0V5H0Z" fill="#aaa" /></svg></Grip>
    </StatusBar>
    <Grasshopper />
  </Page>
);

export default App;
